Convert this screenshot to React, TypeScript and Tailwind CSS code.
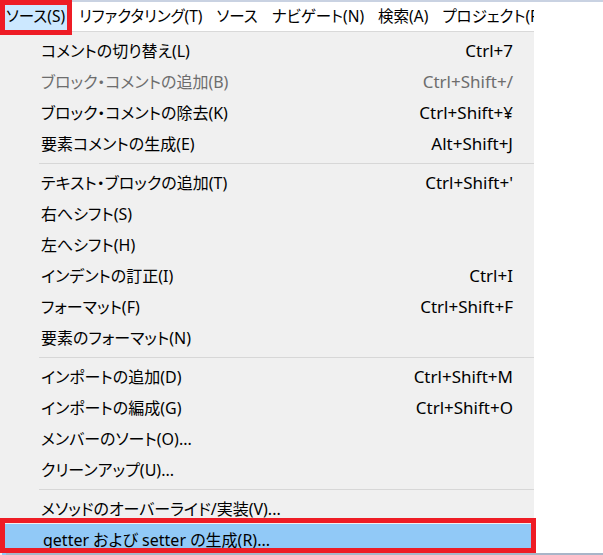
import React from "react";

type Item = { label: string; shortcut?: string; disabled?: boolean; active?: boolean };

const groups: Item[][] = [
  [
    { label: "コメントの切り替え(L)", shortcut: "Ctrl+7" },
    { label: "ブロック・コメントの追加(B)", shortcut: "Ctrl+Shift+/", disabled: true },
    { label: "ブロック・コメントの除去(K)", shortcut: "Ctrl+Shift+¥" },
    { label: "要素コメントの生成(E)", shortcut: "Alt+Shift+J" },
  ],
  [
    { label: "テキスト・ブロックの追加(T)", shortcut: "Ctrl+Shift+'" },
    { label: "右へシフト(S)" },
    { label: "左へシフト(H)" },
    { label: "インデントの訂正(I)", shortcut: "Ctrl+I" },
    { label: "フォーマット(F)", shortcut: "Ctrl+Shift+F" },
    { label: "要素のフォーマット(N)" },
  ],
  [
    { label: "インポートの追加(D)", shortcut: "Ctrl+Shift+M" },
    { label: "インポートの編成(G)", shortcut: "Ctrl+Shift+O" },
    { label: "メンバーのソート(O)..." },
    { label: "クリーンアップ(U)..." },
  ],
  [
    { label: "メソッドのオーバーライド/実装(V)..." },
    { label: "getter および setter の生成(R)...", active: true },
  ],
];

const menubar = ["ソース(S)", "リファクタリング(T)", "ソース", "ナビゲート(N)", "検索(A)", "プロジェクト(P)"];

function Row({ item }: { item: Item }) {
  return (
    <div
      className={`flex h-[31px] items-center justify-between pl-[41px] pr-[21px] ${
        item.active ? "mx-[2px] bg-[#91c9f7]" : ""
      } ${item.disabled ? "text-[#6d6d6d]" : "text-black"}`}
    >
      <span className="whitespace-nowrap">{item.label}</span>
      {item.shortcut && <span className="whitespace-nowrap text-[17px]">{item.shortcut}</span>}
    </div>
  );
}

export default function App() {
  return (
    <div
      className="relative h-[555px] w-[603px] overflow-hidden bg-white text-[16px] [font-feature-settings:'palt']"
      style={{ fontFamily: '"Noto Sans", "Noto Sans CJK JP", sans-serif' }}
    >
      {/* menu bar (last item is clipped by the window edge, as in the capture) */}
      <div className="border-t-2 border-[#c9d2e2]">
        <div className="flex h-[29px] w-[534px] items-center overflow-hidden whitespace-nowrap bg-white text-[15.5px]">
          <div className="ml-[3px] flex h-[27px] shrink-0 items-center bg-[#cce8ff] px-[3px]">{menubar[0]}</div>
          <div className="ml-[11px] flex shrink-0 items-center gap-[14px]">
            {menubar.slice(1).map((m) => (
              <span key={m}>{m}</span>
            ))}
          </div>
        </div>
      </div>

      {/* dropdown */}
      <div className="w-[534px] border-t border-[#d9d9d9] bg-[#f0f0f0] pt-[3px]">
        {groups.map((g, gi) => (
          <div key={gi}>
            {gi > 0 && (
              <div className="flex h-[8px] items-center pl-[39px]">
                <div className="h-px w-full bg-[#d7d7d7]" />
              </div>
            )}
            {g.map((item) => (
              <Row key={item.label} item={item} />
            ))}
          </div>
        ))}
      </div>

      {/* annotation boxes */}
      <div className="absolute left-0 top-0 h-[35px] w-[72px] border-[5px] border-[#ee1c25]" />
      <div className="absolute left-0 top-[518px] h-[35px] w-[536px] border-[5px] border-[#ee1c25]" />
      <div className="absolute bottom-0 left-[6px] right-0 h-[2px] bg-[#a9b5c8]" />
    </div>
  );
}
